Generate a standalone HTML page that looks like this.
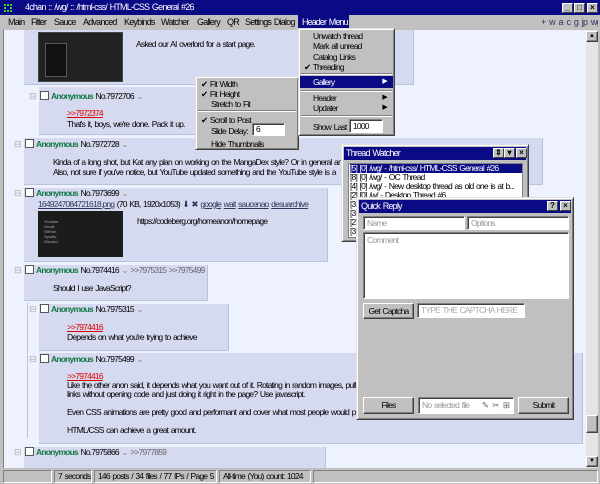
<!DOCTYPE html>
<html><head><meta charset="utf-8"><style>
*{box-sizing:border-box;margin:0;padding:0}
body{width:600px;height:484px;overflow:hidden;background:#c0c0c0;font-family:"Liberation Sans",sans-serif;font-size:8.5px;letter-spacing:-0.8px;word-spacing:1px;color:#000;position:relative}
.a{position:absolute;white-space:nowrap}
.title{left:0;top:0;width:600px;height:15px;background:#0a0a84;color:#fff;line-height:15px;padding-left:25px;font-size:9px}
.m{position:absolute;top:15px;line-height:15px;white-space:nowrap;font-size:9px}
.content{left:0;top:30px;width:586px;height:438px;background:#eef2ff;overflow:hidden;border-left:3px solid #c0c0c0;box-shadow:inset 1px 0 #808080}
.post{position:absolute;background:#d6daf0;border-right:1px solid #b7c5d9;border-bottom:1px solid #b7c5d9}
.hdr{position:absolute;white-space:nowrap}
.cb{display:inline-block;width:9px;height:9px;border:1px solid #555;background:#fff;vertical-align:-1px;margin-right:2px}
.nm{color:#117743;font-weight:bold}
.mn{position:absolute;color:#aaa;font-size:9px;letter-spacing:0}
.q{color:#d00;text-decoration:underline}
.bl{color:#34345c}
.win{position:absolute;background:#c0c0c0;border:1px solid;border-color:#dfdfdf #404040 #404040 #dfdfdf;box-shadow:inset 1px 1px #fff,inset -1px -1px #808080}
.wt{position:absolute;left:2px;right:2px;top:2px;height:13px;background:#0a0a84;color:#fff;line-height:13px;padding-left:2px;font-size:9px}
.btn{position:absolute;background:#c0c0c0;border:1px solid;border-color:#fff #404040 #404040 #fff;box-shadow:inset -1px -1px #808080;text-align:center;white-space:nowrap}
.inp{position:absolute;background:#fff;border:1px solid;border-color:#808080 #fff #fff #808080;box-shadow:inset 1px 1px #404040;color:#999;padding-left:3px;white-space:nowrap;overflow:hidden}
.tb{position:absolute;width:11px;height:10px;background:#c0c0c0;border:1px solid;border-color:#fff #404040 #404040 #fff;font-size:8px;line-height:8px;text-align:center;color:#000;font-weight:bold;letter-spacing:0}
.sb{position:absolute;top:470px;height:13px;border:1px solid;border-color:#808080 #fff #fff #808080;line-height:11px;padding-left:3px;white-space:nowrap}
</style></head><body>
<div class="a title">4chan :: /wg/ :: /html-css/ HTML-CSS General #26</div>
<div class="a" style="left:4px;top:4px;width:8px;height:8px;border:2px dotted #3c3"></div>
<div class="tb" style="left:562px;top:3px">_</div><div class="tb" style="left:574px;top:3px">□</div><div class="tb" style="left:587px;top:3px">×</div>
<div class="m" style="left:8px">Main</div>
<div class="m" style="left:31px">Filter</div>
<div class="m" style="left:54px">Sauce</div>
<div class="m" style="left:83px">Advanced</div>
<div class="m" style="left:124px">Keybinds</div>
<div class="m" style="left:161px">Watcher</div>
<div class="m" style="left:197px">Gallery</div>
<div class="m" style="left:227px">QR</div>
<div class="m" style="left:245px">Settings Dialog</div>
<div class="a" style="left:298px;top:15px;width:51px;height:15px;background:#0a0a84;color:#fff;line-height:15px;padding-left:4px;font-size:9px;letter-spacing:-0.9px">Header Menu</div>
<div class="m" style="left:541px;color:#34345c;word-spacing:2px">+ w a c g jp wg</div>

<div class="a content">
 <div class="post" style="left:21px;top:-2px;width:390px;height:57px"></div>
 <div class="a" style="left:35px;top:2px;width:85px;height:50px;background:#222;border:1px solid #444"><div style="margin:10px 0 0 6px;width:22px;height:34px;background:#111;border:1px solid #555"></div></div>
 <div class="a" style="left:133px;top:9px">Asked our AI overlord for a start page.</div>

 <div class="post" style="left:36px;top:57px;width:180px;height:48px"></div>
 <div class="mn" style="left:26px;top:61px">⊟</div>
 <div class="hdr" style="left:37px;top:61px"><span class="cb"></span><span class="nm">Anonymous</span> No.7972706 <span style="color:#888">⌄</span></div>
 <div class="a q" style="left:64px;top:78px">&gt;&gt;7972374</div>
 <div class="a" style="left:64px;top:89px">That's it, boys, we're done. Pack it up.</div>

 <div class="post" style="left:21px;top:108px;width:519px;height:47px"></div>
 <div class="mn" style="left:11px;top:109px">⊟</div>
 <div class="hdr" style="left:22px;top:109px"><span class="cb"></span><span class="nm">Anonymous</span> No.7972728 <span style="color:#888">⌄</span></div>
 <div class="a" style="left:50px;top:127px">Kinda of a long shot, but Kat any plan on working on the MangaDex style? Or in general any</div>
 <div class="a" style="left:50px;top:137px">Also, not sure if you've notice, but YouTube updated something and the YouTube style is a</div>

 <div class="post" style="left:21px;top:158px;width:304px;height:74px"></div>
 <div class="mn" style="left:11px;top:158px">⊟</div>
 <div class="hdr" style="left:22px;top:158px"><span class="cb"></span><span class="nm">Anonymous</span> No.7973699 <span style="color:#888">⌄</span></div>
 <div class="a" style="left:35px;top:169px"><span class="bl" style="text-decoration:underline">1649247084721618.png</span> (70 KB, 1920x1053) <span class="bl">⬇ ✖ <u>google</u> <u>wait</u> <u>saucenao</u> <u>desuarchive</u></span></div>
 <div class="a" style="left:35px;top:181px;width:85px;height:46px;background:#1c1c1c;color:#aaa;font-size:4px;letter-spacing:0;line-height:5px;padding:8px 0 0 6px">Youtube<br>Gmail<br>GitHub<br>Spotify<br>Discord</div>
 <div class="a" style="left:134px;top:186px">https://codeberg.org/homeanon/homepage</div>

 <div class="post" style="left:21px;top:235px;width:184px;height:36px"></div>
 <div class="mn" style="left:11px;top:235px">⊟</div>
 <div class="hdr" style="left:22px;top:235px"><span class="cb"></span><span class="nm">Anonymous</span> No.7974416 <span style="color:#888">⌄ <span style="color:#666">&gt;&gt;7975315 &gt;&gt;7975499</span></span></div>
 <div class="a" style="left:50px;top:253px">Should I use JavaScript?</div>

 <div class="a" style="left:24px;top:273px;width:1px;height:135px;background:#b7c5d9"></div>
 <div class="post" style="left:36px;top:274px;width:190px;height:47px"></div>
 <div class="mn" style="left:26px;top:274px">⊟</div>
 <div class="hdr" style="left:37px;top:274px"><span class="cb"></span><span class="nm">Anonymous</span> No.7975315 <span style="color:#888">⌄</span></div>
 <div class="a q" style="left:64px;top:292px">&gt;&gt;7974416</div>
 <div class="a" style="left:64px;top:302px">Depends on what you're trying to achieve</div>

 <div class="post" style="left:36px;top:323px;width:544px;height:91px"></div>
 <div class="mn" style="left:26px;top:324px">⊟</div>
 <div class="hdr" style="left:37px;top:324px"><span class="cb"></span><span class="nm">Anonymous</span> No.7975499 <span style="color:#888">⌄</span></div>
 <div class="a q" style="left:64px;top:341px">&gt;&gt;7974416</div>
 <div class="a" style="left:64px;top:350px">Like the other anon said, it depends what you want out of it. Rotating in random images, pull</div>
 <div class="a" style="left:64px;top:359px">links without opening code and just doing it right in the page? Use javascript.</div>
 <div class="a" style="left:64px;top:377px">Even CSS animations are pretty good and performant and cover what most people would pr</div>
 <div class="a" style="left:64px;top:395px">HTML/CSS can achieve a great amount.</div>

 <div class="post" style="left:21px;top:417px;width:302px;height:30px"></div>
 <div class="mn" style="left:11px;top:417px">⊟</div>
 <div class="hdr" style="left:22px;top:417px"><span class="cb"></span><span class="nm">Anonymous</span> No.7975866 <span style="color:#888">⌄ <span style="color:#666">&gt;&gt;7977859</span></span></div>
</div>

<div class="a" style="left:586px;top:30px;width:12px;height:438px;background:#e4e4e4"></div>
<div class="btn" style="left:586px;top:31px;width:12px;height:11px;font-size:6px;line-height:9px;letter-spacing:0">▲</div>
<div class="btn" style="left:586px;top:415px;width:12px;height:18px"></div>
<div class="btn" style="left:586px;top:456px;width:12px;height:11px;font-size:6px;line-height:9px;letter-spacing:0">▼</div>
<div class="a" style="left:598px;top:15px;width:2px;height:469px;background:#c0c0c0"></div>

<div class="win" style="left:195px;top:76px;width:104px;height:74px">
 <div class="a" style="left:5px;top:2px">✔ Fit Width</div>
 <div class="a" style="left:5px;top:12px">✔ Fit Height</div>
 <div class="a" style="left:15px;top:22px">Stretch to Fit</div>
 <div class="a" style="left:2px;top:33px;width:98px;border-top:1px solid #808080;border-bottom:1px solid #fff"></div>
 <div class="a" style="left:5px;top:38px">✔ Scroll to Post</div>
 <div class="a" style="left:15px;top:49px">Slide Delay:</div>
 <div class="inp" style="left:56px;top:46px;width:33px;height:13px;color:#000;line-height:11px">6</div>
 <div class="a" style="left:15px;top:62px">Hide Thumbnails</div>
</div>

<div class="win" style="left:298px;top:28px;width:97px;height:108px">
 <div class="a" style="left:14px;top:2px">Unwatch thread</div>
 <div class="a" style="left:14px;top:12px">Mark all unread</div>
 <div class="a" style="left:14px;top:23px">Catalog Links</div>
 <div class="a" style="left:5px;top:33px">✔ Threading</div>
 <div class="a" style="left:2px;top:44px;width:91px;border-top:1px solid #808080;border-bottom:1px solid #fff"></div>
 <div class="a" style="left:1px;top:47px;width:93px;height:12px;background:#0a0a84;color:#fff;padding-left:13px;line-height:12px">Gallery<span style="position:absolute;right:6px;font-size:7px">▶</span></div>
 <div class="a" style="left:2px;top:61px;width:91px;border-top:1px solid #808080;border-bottom:1px solid #fff"></div>
 <div class="a" style="left:14px;top:64px;width:78px">Header<span style="position:absolute;right:4px;font-size:7px">▶</span></div>
 <div class="a" style="left:14px;top:74px;width:78px">Updater<span style="position:absolute;right:4px;font-size:7px">▶</span></div>
 <div class="a" style="left:2px;top:86px;width:91px;border-top:1px solid #808080;border-bottom:1px solid #fff"></div>
 <div class="a" style="left:14px;top:93px">Show Last</div>
 <div class="inp" style="left:50px;top:90px;width:34px;height:14px;color:#000;line-height:12px">1000</div>
</div>

<div class="win" style="left:341px;top:144px;width:188px;height:98px">
 <div class="wt">Thread Watcher</div>
 <div class="tb" style="left:151px;top:3px">⇕</div><div class="tb" style="left:162px;top:3px">▾</div><div class="tb" style="left:174px;top:3px">×</div>
 <div class="a" style="left:6px;top:18px;width:175px;height:75px;background:#fff;border:1px solid #808080;overflow:hidden;line-height:9px;padding-left:1px">
  <div style="background:#0a0a84;color:#fff">[5] [0] /wg/ - /html-css/ HTML-CSS General #26</div>
  <div>[8] [0] /wg/ - OC Thread</div>
  <div>[4] [0] /wg/ - New desktop thread as old one is at b...</div>
  <div>[2] [0] /w/ - Desktop Thread #6</div>
  <div>[3</div><div>[3</div><div>[2</div><div>[3</div>
 </div>
</div>

<div class="win" style="left:356px;top:197px;width:218px;height:223px">
 <div class="wt">Quick Reply</div>
 <div class="tb" style="left:190px;top:3px">?</div><div class="tb" style="left:203px;top:3px">×</div>
 <div class="inp" style="left:6px;top:18px;width:102px;height:14px;line-height:12px">Name</div>
 <div class="inp" style="left:110px;top:18px;width:102px;height:14px;line-height:12px">Options</div>
 <div class="inp" style="left:6px;top:34px;width:206px;height:67px;padding-top:2px">Comment</div>
 <div class="btn" style="left:6px;top:105px;width:51px;height:16px;line-height:14px">Get Captcha</div>
 <div class="inp" style="left:60px;top:105px;width:108px;height:15px;line-height:13px;color:#aaa">TYPE THE CAPTCHA HERE</div>
 <div class="btn" style="left:6px;top:199px;width:51px;height:17px;line-height:15px">Files</div>
 <div class="inp" style="left:61px;top:199px;width:96px;height:17px;line-height:15px">No selected file <span style="color:#666;position:absolute;right:3px;letter-spacing:0">✎ ✂ ⊞</span></div>
 <div class="btn" style="left:161px;top:199px;width:51px;height:17px;line-height:15px">Submit</div>
</div>

<div class="sb" style="left:3px;width:49px"></div>
<div class="sb" style="left:54px;width:38px">7 seconds</div>
<div class="sb" style="left:94px;width:123px">146 posts / 34 files / 77 IPs / Page 5</div>
<div class="sb" style="left:219px;width:92px">All-time (You) count: 1024</div>
<div class="sb" style="left:313px;width:285px"></div>
</body></html>
